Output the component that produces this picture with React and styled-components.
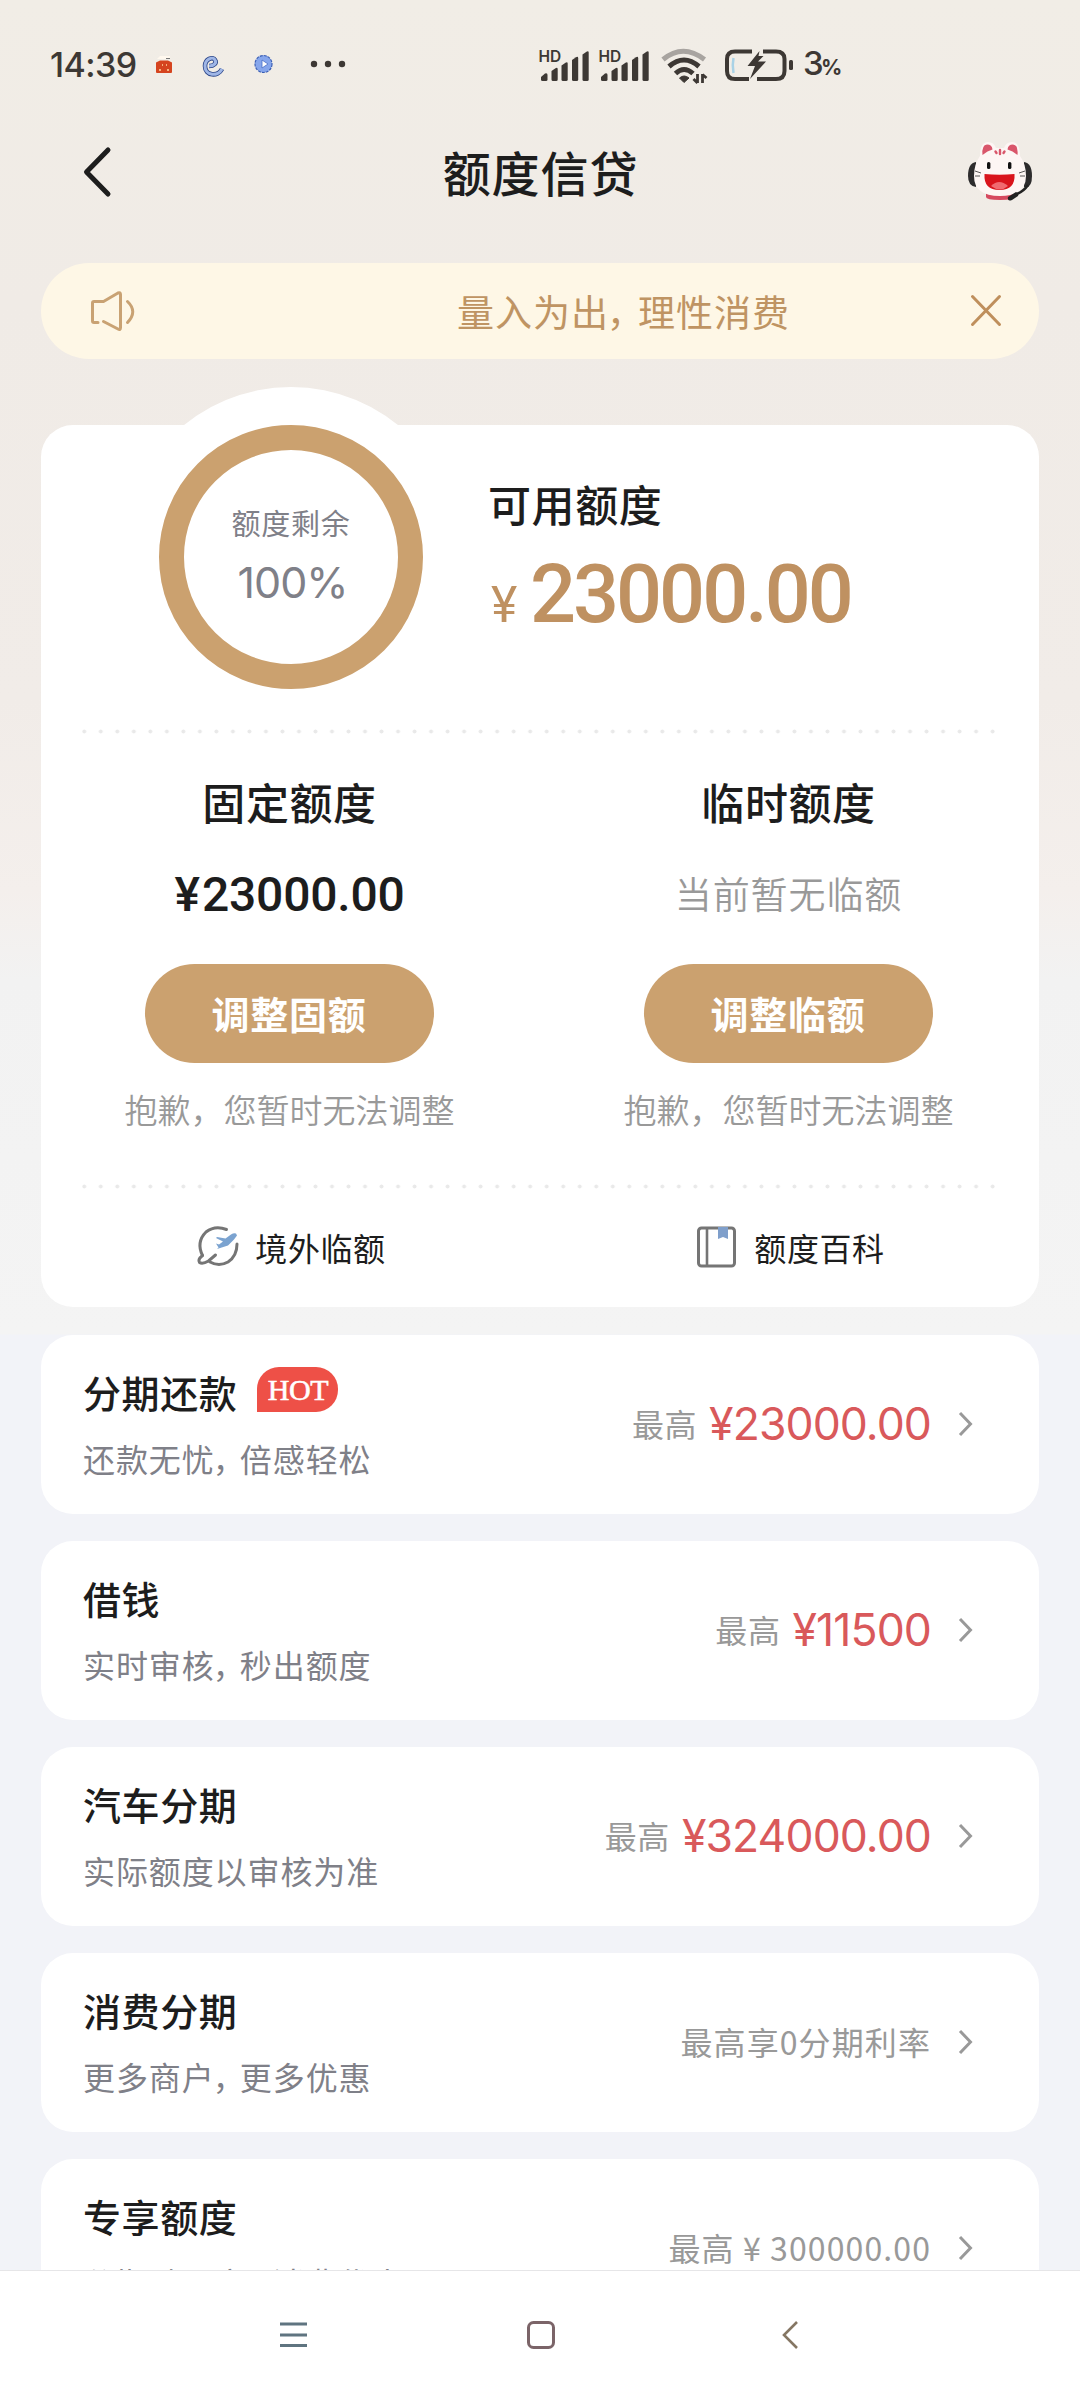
import React from "react";
import styled, { createGlobalStyle } from "styled-components";

const GlobalStyle = createGlobalStyle`
  * {
    box-sizing: border-box;
  }

  body {
    margin: 0;
    font-family: "Noto Sans CJK SC", sans-serif;
    color: #1d1d1d;
  }

  h1, h2, h3, p {
    margin: 0;
    font-weight: 500;
  }

  button {
    border: 0;
    padding: 0;
    background: none;
    font-family: inherit;
  }

  svg {
    display: block;
    flex: none;
    overflow: visible;
  }
`;

const Screen = styled.div`
  width: 1080px;
  height: 2400px;
  overflow: hidden;
  display: flex;
  flex-direction: column;
  background: linear-gradient(
      180deg,
      #f1ede6 0,
      #f0ebe6 300px,
      #f1ece8 700px,
      #f4efec 890px,
      #f2f2f2 980px,
      #f4f4f4 1334px,
      #f2f3f8 1335px
    );
`;

const StatusBar = styled.div`
  height: 127px;
  padding: 2px 239px 0 50px;
  display: flex;
  align-items: center;
  justify-content: space-between;
  flex: none;
  color: #3d3834;
  font-family: Inter, sans-serif;
`;

const StatusGroup = styled.div`
  display: flex;
  align-items: center;
`;

const Clock = styled.span`
  width: 105px;
  font-size: 34px;
  font-weight: 500;
  letter-spacing: -0.6px;
  white-space: nowrap;
`;

const BatteryLevel = styled.span`
  margin-left: 10px;
  padding-top: 2px;
  width: 38px;
  font-size: 33px;
  line-height: 40px;
  font-weight: 500;
  letter-spacing: -2.6px;
  white-space: nowrap;

  small {
    font-size: 21px;
    font-weight: 700;
  }
`;

const Header = styled.header`
  height: 90px;
  padding: 0 48px 0 83px;
  display: grid;
  grid-template-columns: 80px 1fr 64px;
  align-items: center;
  flex: none;
`;

const PageTitle = styled.h1`
  padding: 0 50px 3px 0;
  text-align: center;
  font-size: 48px;
  line-height: 70px;
  letter-spacing: 0.9px;
`;

const Notice = styled.div`
  height: 96px;
  margin: 46px 41px 0;
  padding: 0 37px 0 49px;
  display: flex;
  align-items: center;
  flex: none;
  border-radius: 48px;
  background: #fef7e6;
  color: #bf9463;

  p {
    flex: 1;
    padding-left: 322px;
    font-size: 37px;
    line-height: 50px;
    letter-spacing: 1px;
    font-weight: 400;
  }
`;

const Card = styled.section`
  position: relative;
  height: 882px;
  margin: 66px 41px 0;
  flex: none;
  border-radius: 32px;
  background: #fff;
`;

/* white disc that sticks out over the top edge of the card */
const Halo = styled.div`
  position: absolute;
  left: 80px;
  top: -38px;
  width: 340px;
  height: 340px;
  border-radius: 50%;
  background: #fff;
`;

const Summary = styled.div`
  position: relative;
  height: 304px;
  padding-left: 118px;
  display: flex;
  align-items: flex-start;
`;

const Ring = styled.div`
  width: 264px;
  height: 264px;
  padding-top: 52px;
  display: flex;
  flex-direction: column;
  align-items: center;
  border: 25px solid #cba16f;
  border-radius: 50%;
  color: #7f8088;
  flex: none;

  span {
    font-size: 29px;
    line-height: 40px;
    letter-spacing: 0.7px;
  }

  strong {
    margin-top: 13px;
    padding-left: 3px;
    font-family: Inter, sans-serif;
    font-size: 43px;
    line-height: 54px;
    font-weight: 400;
    letter-spacing: -1px;
  }
`;

const Available = styled.div`
  margin-left: 65px;
  padding-top: 47px;

  h2 {
    font-size: 43px;
    line-height: 62px;
    letter-spacing: 0.6px;
  }
`;

const BigAmount = styled.div`
  margin-top: 13px;
  padding-left: 3px;
  display: flex;
  align-items: baseline;
  color: #bf9161;
  font-family: Roboto, sans-serif;
  font-size: 81px;
  line-height: 96px;
  font-weight: 500;
  letter-spacing: -3px;

  small {
    width: 39px;
    font-size: 50px;
    font-weight: 450;
  }
`;

const Dots = styled.div`
  height: 5px;
  margin: 0 41px;
  background: radial-gradient(circle at center, #e9e9e9 0 1.6px, transparent 2.3px) -6px
    0 / 16.53px 5px repeat-x;
`;

const Columns = styled.div`
  display: grid;
  grid-template-columns: 497px 1fr;
`;

const Quota = styled.div`
  height: 450px;
  padding-top: 36px;
  display: flex;
  flex-direction: column;
  align-items: center;

  h3 {
    font-size: 43px;
    line-height: 62px;
    letter-spacing: 0.6px;
  }
`;

const QuotaValue = styled.div`
  height: 60px;
  margin-top: 32px;
  line-height: ${({ $empty }) => ($empty ? "58px" : "62px")};
  white-space: nowrap;
  color: ${({ $empty }) => ($empty ? "#999" : "#1d1d1d")};
  font-family: ${({ $empty }) =>
    $empty ? '"Noto Sans CJK SC", sans-serif' : "Roboto, sans-serif"};
  font-size: ${({ $empty }) => ($empty ? "37px" : "48px")};
  font-weight: ${({ $empty }) => ($empty ? 350 : 480)};
  letter-spacing: ${({ $empty }) => ($empty ? "0.9px" : "-0.2px")};

  &::first-letter {
    letter-spacing: ${({ $empty }) => ($empty ? "0.9px" : "2px")};
  }
`;

const AdjustButton = styled.button`
  width: 289px;
  height: 99px;
  margin-top: 40px;
  padding: 0 1px 3px 0;
  border-radius: 50px;
  background: #cba16f;
  color: #fff;
  font-size: 38px;
  font-weight: 700;
  letter-spacing: 0.7px;
`;

const Hint = styled.p`
  margin-top: 22px;
  color: #999;
  font-size: 33px;
  line-height: 48px;
  font-weight: 350;
  white-space: nowrap;
`;

const CardLink = styled.a`
  height: 116px;
  padding-left: 4px;
  display: flex;
  align-items: center;
  justify-content: center;
  gap: 16px;
  font-size: 32px;
  letter-spacing: 0.6px;
`;

const List = styled.main`
  height: 935px;
  margin-top: 28px;
  padding: 0 41px;
  display: flex;
  flex-direction: column;
  gap: 27px;
  overflow: hidden;
  flex: none;
`;

const Row = styled.article`
  height: 179px;
  padding: 30px 66px 0 42px;
  display: flex;
  justify-content: space-between;
  flex: none;
  border-radius: 32px;
  background: #fff;
`;

const RowTitle = styled.h3`
  display: flex;
  gap: 20px;
  font-size: 38px;
  line-height: 54px;
  letter-spacing: 0.6px;
`;

const HotBadge = styled.span`
  width: 81px;
  height: 45px;
  margin-top: 2px;
  border-radius: 22px 22px 22px 0;
  background: #ee5047;
  color: #fff;
  font-family: "Liberation Serif", serif;
  font-size: 30px;
  font-weight: 400;
  line-height: 45px;
  letter-spacing: -0.4px;
  text-align: center;
  -webkit-text-stroke: 0.6px #fff;
`;

const RowNote = styled.p`
  margin-top: 15px;
  color: #7f8088;
  font-size: 32px;
  line-height: 48px;
  font-weight: 400;
  letter-spacing: 0.9px;
  white-space: nowrap;
`;

const RowValue = styled.div`
  height: 117px;
  display: flex;
  align-items: center;
  white-space: nowrap;
  color: #999;
  font-size: 32px;
  line-height: 44px;
  letter-spacing: ${({ $plain }) => ($plain ? "1.1px" : "0.6px")};

  svg {
    margin-left: 27px;
  }
`;

const RowLabel = styled.span`
  padding-bottom: 2px;
`;

const RedAmount = styled.span`
  margin-left: 12px;
  color: #d9595b;
  font-family: Inter, sans-serif;
  font-size: 44.5px;
  line-height: 54px;
  letter-spacing: -0.9px;
`;

/* half-width comma with a little air after it */
const NarrowComma = styled.span`
  font-feature-settings: "halt" 1;
  margin: 0 0.32em 0 -0.06em;
`;

const NavBar = styled.nav`
  height: 130px;
  padding: 0 282px 2px 280px;
  display: flex;
  align-items: center;
  justify-content: space-between;
  flex: none;
  border-top: 1px solid #e6e6e8;
  background: #fff;
`;

const HomeIcon = styled.svg`
  margin-right: 8px;
`;

const rows = [
  { title: "分期还款", note: "还款无忧，倍感轻松", hot: true, amount: "¥23000.00" },
  { title: "借钱", note: "实时审核，秒出额度", amount: "¥11500" },
  { title: "汽车分期", note: "实际额度以审核为准", amount: "¥324000.00" },
  { title: "消费分期", note: "更多商户，更多优惠", text: "最高享0分期利率" },
  { title: "专享额度", note: "分期随心享，消费优惠", text: "最高 ¥ 300000.00" },
];

function NoteText({ children }) {
  const [head, tail] = children.split("，");
  if (!tail) return head;
  return (
    <>
      {head}
      <NarrowComma>，</NarrowComma>
      {tail}
    </>
  );
}

function NotificationIcons() {
  return (
    <svg width="196" height="30" viewBox="155 50 196 30" fill="none">
      {/* red packet app */}
      <path d="M157 59h13v-3h-10z" fill="#fff8ee" />
      <path d="M166 58.500h4" stroke="#777" strokeWidth="1" />
      <path d="M156 62.500l4-2h8l4 2v9.500q0 1-1 1h-14q-1 0-1-1z" fill="#d5441f" />
      <path d="M159 70h2M162 65h1M166 65h1M167 70h2" stroke="#ffd9a0" strokeWidth="1.500" />
      {/* swirl */}
      <path
        d="M209 66c5 0 8-3 6-6-2-4-10-1-10 6 0 10 13 11 17 3"
        stroke="#2b4588"
        strokeWidth="4.600"
      />
      <path
        d="M209 66c5 0 8-3 6-6-2-4-10-1-10 6 0 10 13 11 17 3"
        stroke="#9fb6e6"
        strokeWidth="3"
      />
      {/* player */}
      <circle cx="263.500" cy="64" r="8.500" fill="#86a6ec" stroke="#3a5eb5" strokeWidth="1.200" strokeDasharray="3 1" />
      <path d="M262 60l6 4-6 4z" fill="#fff" stroke="#4a6fc8" strokeWidth="0.800" />
      <g fill="#3d3834">
        <circle cx="314" cy="64" r="3.200" />
        <circle cx="328" cy="64" r="3.200" />
        <circle cx="342" cy="64" r="3.200" />
      </g>
    </svg>
  );
}

function Signal() {
  return (
    <svg width="60" height="34" viewBox="0 0 60 34" fill="#3d3834">
      <text x="-0.500" y="13.500" fontSize="15.500" fontWeight="600" fontFamily="Inter, sans-serif">
        HD
      </text>
      <path d="M2 29l4-3.500q2.500-1 2.500 1.500v4.500q0 1.500-1.500 1.500H3.500q-1.500 0-1.500-1.500z" />
      <path d="M12.500 23l4-2.800q2.200-1 2.200 1V31.500q0 1.500-1.500 1.500h-3.200q-1.500 0-1.500-1.500z" />
      <path d="M22.500 17.500l4-2.800q2.200-1 2.200 1V31.500q0 1.500-1.500 1.500h-3.200q-1.500 0-1.500-1.500z" />
      <path d="M33 12l4-2.800q2.200-1 2.200 1V31.500q0 1.500-1.500 1.500h-3.200q-1.500 0-1.500-1.500z" />
      <path d="M43.500 6.500l4-2.800q2.200-1 2.200 1V31.500q0 1.500-1.500 1.500h-3.200q-1.500 0-1.500-1.500z" />
    </svg>
  );
}

function Wifi() {
  return (
    <svg width="66" height="34" viewBox="0 0 66 34" fill="none" strokeWidth="5">
      <path d="M4 11.500Q24-5 45.500 11.500" stroke="#a8a4a0" />
      <path d="M10 18.500Q25 5.500 40 18.500" stroke="#3d3834" />
      <path d="M16.500 25.500Q25 17.500 34 25.500" stroke="#3d3834" />
      <path d="M20.500 30q4.500-4 9.500 0l-5 4.500z" fill="#3d3834" stroke="#3d3834" strokeWidth="1" />
      <path d="M38.500 26v9M38.500 35l-4-4M43.500 35v-9M43.500 26.500l4 3.500" stroke="#3d3834" strokeWidth="2.800" />
    </svg>
  );
}

function Battery() {
  return (
    <svg width="68" height="34" viewBox="0 0 68 34" fill="none">
      <path d="M27 3.500H10Q2 3.500 2 11v12q0 8 8 8h14" stroke="#3d3834" strokeWidth="4" />
      <path d="M38 3.500h13q8.500 0 8.500 7.500v12q0 8-8.500 8H32" stroke="#3d3834" strokeWidth="4" />
      <path d="M8.500 10q-1.500 7 0 15" stroke="#a9d2e6" strokeWidth="2.500" />
      <path d="M34.500 3L22.500 18h7.500l-5 13 16-17.500h-8l5.500-5.500h-5z" fill="#3d3834" />
      <rect x="64" y="12" width="4" height="10" rx="1.500" fill="#3d3834" />
    </svg>
  );
}

function Mascot() {
  return (
    <svg width="64" height="58" viewBox="0 0 64 58">
      <path d="M8 19Q0 20 0 33q0 10 8 11z" fill="#2d2c2d" />
      <path d="M56 19q8 1 8 14t-8 11z" fill="#2d2c2d" />
      <path d="M18 50h28v4q0 3-14 3t-14-3z" fill="#d64a60" />
      <path
        d="M12 13Q12-1 20-1q6 0 8 6h8q2-6 8-6 8 0 8 14 6 8 6 20 0 20-26 20T6 33Q6 21 12 13z"
        fill="#fdf6f4"
      />
      <path d="M14.500 12Q13.500 2 19 1.500q5 0 5.500 5-5 1-10 5.500z" fill="#d9566b" />
      <path d="M49.500 12Q50.500 2 45 1.500q-5 0-5.500 5 5 1 10 5.500z" fill="#d9566b" />
      <path d="M27.500 8.500l1 1.500M32 7v4M36.500 8.500l-1 1.500" stroke="#d9566b" strokeWidth="2.400" strokeLinecap="round" />
      <rect x="19" y="19" width="3.400" height="7" rx="1.600" fill="#111" />
      <rect x="40" y="19" width="3.400" height="7" rx="1.600" fill="#111" />
      <path d="M16.500 31q15 1.500 30 0 1 16-15 16t-15-16z" fill="#d9141c" />
      <path d="M23 43q8-8 17 0-8 7-17 0z" fill="#f06a70" />
      <path d="M7 28l6 2M7 33h5M57 28l-6 2M57 33h-5" stroke="#444" strokeWidth="0.900" />
      <path d="M60 42Q56 48 49 51" stroke="#222" strokeWidth="2.500" fill="none" />
      <path d="M40 54l8-5q3 1 2 4l-6 4q-5 2-4-3z" fill="#222" />
    </svg>
  );
}

function Speaker() {
  return (
    <svg
      width="45"
      height="44"
      viewBox="0 0 45 44"
      fill="none"
      stroke="#c9a273"
      strokeWidth="3"
      strokeLinecap="round"
      strokeLinejoin="round"
    >
      <path d="M8 33.500H4q-1.500 0-1.500-1.500V14q0-1.500 1.500-1.500h9.500L28 4q2.500-1 2.500 1.500v33q0 3-2.500 1.500l-14.500-7.500" />
      <path d="M37.500 12.500Q48 22.500 37.500 33.500" />
    </svg>
  );
}

function PlaneIcon() {
  return (
    <svg width="42" height="42" viewBox="0 0 42 42" fill="none">
      <path
        d="M29.500 3.500Q18-1 9 6-1 16 5.500 29.500"
        stroke="#757575"
        strokeWidth="3"
        strokeLinecap="round"
      />
      <path
        d="M5.500 29.500q-5 4-3 7 3 2 9-1.500l7-6M13 36q9 5 18 0 9-6 9-18"
        stroke="#757575"
        strokeWidth="3"
        strokeLinecap="round"
      />
      <path d="M39 7.500q-2-1-5 1l-5.500 4-8.500-1.500-1 1 7 3.500-4 3-3-1 2.500 4-1.500 1.500 11-3.500 6-6 3-4z" fill="#7ba3d0" />
    </svg>
  );
}

function BookIcon() {
  return (
    <svg width="42" height="44" viewBox="0 0 42 44" fill="none">
      <rect x="2.500" y="3" width="36" height="38" rx="3" stroke="#757575" strokeWidth="3" />
      <path d="M11 3v38" stroke="#757575" strokeWidth="2.600" />
      <path d="M22 2h10v12l-5-2-5 2z" fill="#7f9fcb" />
    </svg>
  );
}

function Chevron() {
  return (
    <svg width="15" height="26" viewBox="0 0 15 26" fill="none">
      <path d="M2 2l10.500 11L2 24" stroke="#999" strokeWidth="3" />
    </svg>
  );
}

function App() {
  return (
    <>
      <GlobalStyle />
      <Screen>
        <StatusBar>
          <StatusGroup>
            <Clock>14:39</Clock>
            <NotificationIcons />
          </StatusGroup>
          <StatusGroup>
            <Signal />
            <Signal />
            <Wifi />
            <Battery />
            <BatteryLevel>
              3<small>%</small>
            </BatteryLevel>
          </StatusGroup>
        </StatusBar>

        <Header>
          <svg width="28" height="50" viewBox="0 0 28 50" fill="none">
            <path
              d="M25 3L3.500 25 25 47"
              stroke="#1d1d1d"
              strokeWidth="5"
              strokeLinecap="round"
              strokeLinejoin="round"
            />
          </svg>
          <PageTitle>额度信贷</PageTitle>
          <Mascot />
        </Header>

        <Notice>
          <Speaker />
          <p>
            <NoteText>量入为出，理性消费</NoteText>
          </p>
          <svg width="32" height="34" viewBox="0 0 32 34" fill="none">
            <path d="M2.500 2.500l27 28M29.500 2.500l-27 28" stroke="#bf8f5c" strokeWidth="3" strokeLinecap="round" />
          </svg>
        </Notice>

        <Card>
          <Halo />
          <Summary>
            <Ring>
              <span>额度剩余</span>
              <strong>100%</strong>
            </Ring>
            <Available>
              <h2>可用额度</h2>
              <BigAmount>
                <small>¥</small>23000.00
              </BigAmount>
            </Available>
          </Summary>
          <Dots />
          <Columns>
            <Quota>
              <h3>固定额度</h3>
              <QuotaValue>¥23000.00</QuotaValue>
              <AdjustButton>调整固额</AdjustButton>
              <Hint>抱歉，您暂时无法调整</Hint>
            </Quota>
            <Quota>
              <h3>临时额度</h3>
              <QuotaValue $empty>当前暂无临额</QuotaValue>
              <AdjustButton>调整临额</AdjustButton>
              <Hint>抱歉，您暂时无法调整</Hint>
            </Quota>
          </Columns>
          <Dots />
          <Columns>
            <CardLink>
              <PlaneIcon />
              境外临额
            </CardLink>
            <CardLink>
              <BookIcon />
              额度百科
            </CardLink>
          </Columns>
        </Card>

        <List>
          {rows.map((row) => (
            <Row key={row.title}>
              <div>
                <RowTitle>
                  {row.title}
                  {row.hot && <HotBadge>HOT</HotBadge>}
                </RowTitle>
                <RowNote>
                  <NoteText>{row.note}</NoteText>
                </RowNote>
              </div>
              <RowValue $plain={!row.amount}>
                <RowLabel>{row.amount ? "最高" : row.text}</RowLabel>
                {row.amount && <RedAmount>{row.amount}</RedAmount>}
                <Chevron />
              </RowValue>
            </Row>
          ))}
        </List>

        <NavBar>
          <svg width="28" height="28" viewBox="0 0 28 28">
            <path d="M0 3h27M0 14h27M0 24.500h27" stroke="#5f7480" strokeWidth="3" />
          </svg>
          <HomeIcon width="28" height="28" viewBox="0 0 28 28" fill="none">
            <rect x="1.500" y="1.500" width="25" height="25" rx="5" stroke="#7b6468" strokeWidth="3" />
          </HomeIcon>
          <svg width="16" height="28" viewBox="0 0 16 28" fill="none">
            <path d="M15 1L2 14l13 13" stroke="#857663" strokeWidth="2.600" />
          </svg>
        </NavBar>
      </Screen>
    </>
  );
}

export default App;
